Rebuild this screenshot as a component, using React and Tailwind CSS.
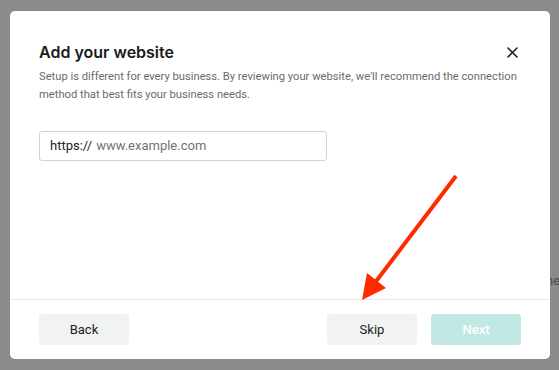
import React from 'react';

const Arrow = () => (
  <svg className="absolute left-0 top-0 pointer-events-none" width="559" height="370" viewBox="0 0 559 370">
    <line x1="456" y1="176" x2="374" y2="284" stroke="#ff2a00" strokeWidth="4" strokeLinecap="butt" />
    <polygon points="362,300 367,273 386,288" fill="#ff2a00" />
  </svg>
);

export default function App() {
  return (
    <div className="relative w-[559px] h-[370px] bg-[#8b8b8b] pt-[11px] pl-[10px] overflow-hidden" style={{ fontFamily: 'Roboto, "Liberation Sans", sans-serif' }}>
      {/* text from the page behind */}
      <span className="absolute left-[546px] top-[271px] text-[13px] text-[#4a4a4a]">ne</span>

      <div className="relative w-[540px] h-[348px] bg-white rounded-[5px] flex flex-col">
        <div className="flex-1 px-[29px] pt-[30px]">
          <div className="flex items-center justify-between">
            <h2 className="font-['Inter'] text-[16px] leading-[22px] font-semibold text-[#1a1a1a]">Add your website</h2>
            <button className="w-[20px] h-[20px] flex items-center justify-center -mr-[1px]">
              <svg width="11" height="11" viewBox="0 0 11 11">
                <path d="M1 1 L10 10 M10 1 L1 10" stroke="#222" strokeWidth="1.6" strokeLinecap="round" />
              </svg>
            </button>
          </div>
          <p className="mt-[5px] text-[11.2px] leading-[18px] text-[#6b6b6b]">
            Setup is different for every business. By reviewing your website, we'll recommend the connection method that best fits your business needs.
          </p>

          <div className="mt-[27px] w-[288px] h-[30px] border border-[#d2d2d2] rounded-[3px] flex items-center px-[10px] text-[13px]">
            <span className="text-[#222]">https://</span>
            <span className="ml-[4px] text-[#737373]">www.example.com</span>
          </div>
        </div>

        <div className="border-t border-[#e8e8e8] px-[29px] pt-[14px] pb-[14px] flex items-center justify-between">
          <button className="w-[90px] h-[31px] rounded-[3px] bg-[#f1f2f2] text-[13px] text-[#222]">Back</button>
          <div className="flex gap-[14px]">
            <button className="w-[90px] h-[31px] rounded-[3px] bg-[#f1f2f2] text-[13px] text-[#222]">Skip</button>
            <button className="w-[90px] h-[31px] rounded-[3px] bg-[#c2e8e5] text-[13px] font-medium text-white">Next</button>
          </div>
        </div>
      </div>

      <Arrow />
    </div>
  );
}
